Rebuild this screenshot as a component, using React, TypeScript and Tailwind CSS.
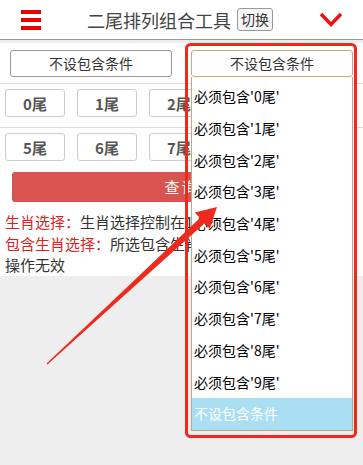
const tails = ['0尾', '1尾', '2尾', '3尾', '4尾'];
const tails2 = ['5尾', '6尾', '7尾', '8尾', '9尾'];
const options = Array.from({ length: 10 }, (_, i) => `必须包含'${i}尾'`);

const font = { fontFamily: '"Noto Sans CJK SC", "Microsoft YaHei", sans-serif' };

const TailButton = ({ label }: { label: string }) => (
  <button className="w-[60px] h-[28px] bg-white border border-[#ccc] rounded-[3px] text-[15px] font-bold text-[#555] leading-none">
    {label}
  </button>
);

export default function App() {
  return (
    <div className="relative w-[363px] h-[465px] bg-[#eeeeee] overflow-hidden text-[#333]" style={font}>
      {/* header */}
      <div className="h-[40px] bg-white border-b border-[#999] flex items-center justify-between pl-[21px] pr-[20px]">
        <div className="flex flex-col gap-[4px] w-[20px]">
          <span className="h-[4px] bg-[#ee0000]" />
          <span className="h-[4px] bg-[#ee0000]" />
          <span className="h-[4px] bg-[#ee0000]" />
        </div>
        <div className="flex items-center gap-[6px]">
          <span className="text-[18px] leading-none text-[#444]">二尾排列组合工具</span>
          <span className="h-[23px] px-[3px] border border-[#999] rounded-[3px] bg-[#f7f7f7] text-[14px] leading-[21px]">切换</span>
        </div>
        <svg width="24" height="16" viewBox="0 0 24 16">
          <polyline points="2,2 12,12.5 22,2" fill="none" stroke="#ee1111" strokeWidth="3.5" />
        </svg>
      </div>

      <div className="h-[3px]" />

      <div className="bg-white">
        {/* select row */}
        <div className="flex justify-between px-[10px] pt-[7px] pb-[6px] border-b border-[#ddd]">
          <div className="w-[162px] h-[27px] border border-[#999] rounded-[3px] flex items-center justify-center text-[14px]">
            不设包含条件
          </div>
          <div className="relative w-[162px]">
            <div className="h-[27px] border border-[#c5a872] rounded-[3px] flex items-center justify-center text-[14px] bg-white">
              不设包含条件
            </div>
            <div className="absolute left-0 top-[27px] w-[162px] bg-white border border-t-0 border-[#c5a872] pt-[4px] z-10">
              {options.map((o) => (
                <div key={o} className="h-[31.7px] flex items-center pl-[2px] text-[14px] text-black">
                  {o}
                </div>
              ))}
              <div className="h-[31.7px] flex items-center pl-[2px] text-[14px] text-white bg-[#aadff3]">
                不设包含条件
              </div>
            </div>
          </div>
        </div>

        {/* tail buttons */}
        <div className="flex gap-[12px] px-[5px] pt-[5px] pb-[10px] border-b border-[#ddd]">
          {tails.map((t) => (
            <TailButton key={t} label={t} />
          ))}
        </div>
        <div className="flex gap-[12px] px-[5px] pt-[5px] pb-[11px]">
          {tails2.map((t) => (
            <TailButton key={t} label={t} />
          ))}
        </div>

        <div className="px-[12px]">
          <button className="w-full h-[30px] bg-[#d9534f] rounded-[3px] text-white text-[15px] tracking-[2px]">查询</button>
        </div>

        <div className="px-[5px] pt-[9px] text-[15px] leading-[21.5px]">
          <p>
            <span className="text-[#e02020]">生肖选择：</span>生肖选择控制在12个以内
          </p>
          <p>
            <span className="text-[#e02020]">包含生肖选择：</span>所选包含生肖须在所选生肖内，否则操作无效
          </p>
        </div>
      </div>

      {/* annotation overlay */}
      <svg className="absolute inset-0 pointer-events-none z-20" width="363" height="465" viewBox="0 0 363 465">
        <rect x="186.5" y="44.5" width="169" height="392" rx="4" fill="none" stroke="#ee2a1e" strokeWidth="3" />
        <polygon
          points="47.4,364.6 204.7,223.2 209.8,228.7 217,207 194.8,212.5 199.9,218 46.6,363.4"
          fill="#ee2a1e"
        />
      </svg>
    </div>
  );
}
